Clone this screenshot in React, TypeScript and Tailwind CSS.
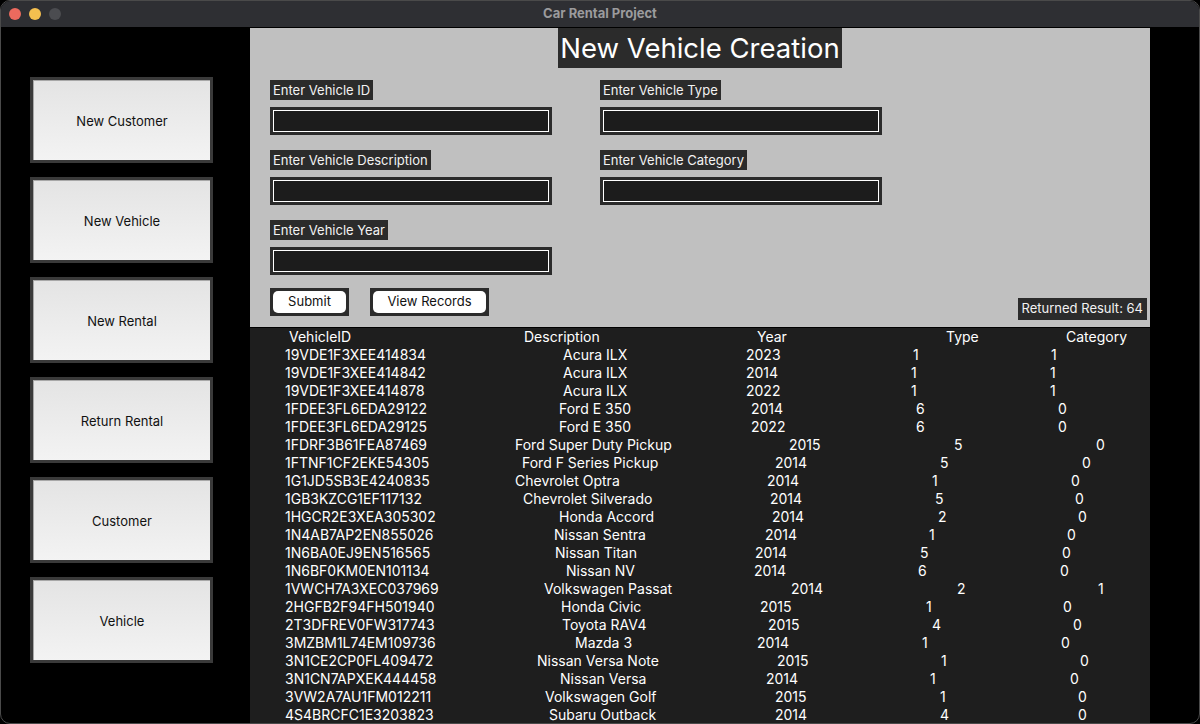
import React from "react";

// [id, description, year, type, category, descX, yearX, typeX, catX]
type Row = [string, string, string, string, string, number, number, number, number];

const rows: Row[] = [
  ["19VDE1F3XEE414834", "Acura ILX", "2023", "1", "1", 563, 746, 913, 1051],
  ["19VDE1F3XEE414842", "Acura ILX", "2014", "1", "1", 563, 746, 911, 1050],
  ["19VDE1F3XEE414878", "Acura ILX", "2022", "1", "1", 563, 746, 911, 1050],
  ["1FDEE3FL6EDA29122", "Ford E 350", "2014", "6", "0", 559, 751, 916, 1058],
  ["1FDEE3FL6EDA29125", "Ford E 350", "2022", "6", "0", 559, 751, 916, 1058],
  ["1FDRF3B61FEA87469", "Ford Super Duty Pickup", "2015", "5", "0", 515, 789, 954, 1096],
  ["1FTNF1CF2EKE54305", "Ford F Series Pickup", "2014", "5", "0", 522, 775, 940, 1082],
  ["1G1JD5SB3E4240835", "Chevrolet Optra", "2014", "1", "0", 515, 767, 932, 1071],
  ["1GB3KZCG1EF117132", "Chevrolet Silverado", "2014", "5", "0", 523, 770, 935, 1075],
  ["1HGCR2E3XEA305302", "Honda Accord", "2014", "2", "0", 559, 772, 938, 1078],
  ["1N4AB7AP2EN855026", "Nissan Sentra", "2014", "1", "0", 554, 765, 929, 1067],
  ["1N6BA0EJ9EN516565", "Nissan Titan", "2014", "5", "0", 555, 755, 920, 1062],
  ["1N6BF0KM0EN101134", "Nissan NV", "2014", "6", "0", 566, 754, 918, 1060],
  ["1VWCH7A3XEC037969", "Volkswagen Passat", "2014", "2", "1", 544, 791, 957, 1098],
  ["2HGFB2F94FH501940", "Honda Civic", "2015", "1", "0", 561, 760, 926, 1063],
  ["2T3DFREV0FW317743", "Toyota RAV4", "2015", "4", "0", 562, 768, 932, 1073],
  ["3MZBM1L74EM109736", "Mazda 3", "2014", "1", "0", 575, 757, 922, 1061],
  ["3N1CE2CP0FL409472", "Nissan Versa Note", "2015", "1", "0", 537, 777, 941, 1080],
  ["3N1CN7APXEK444458", "Nissan Versa", "2014", "1", "0", 560, 766, 930, 1070],
  ["3VW2A7AU1FM012211", "Volkswagen Golf", "2015", "1", "0", 545, 775, 940, 1078],
  ["4S4BRCFC1E3203823", "Subaru Outback", "2014", "4", "0", 549, 775, 940, 1078],
];

const sideButtons = ["New Customer", "New Vehicle", "New Rental", "Return Rental", "Customer", "Vehicle"];

function SideButton({ label }: { label: string }) {
  return (
    <div className="w-[183px] h-[86px] bg-[#3a3a3a] p-[3px]">
      <div className="w-full h-full bg-gradient-to-b from-[#e4e4e4] to-[#f3f3f3] border-t border-l border-[#a8a8a8] flex items-center justify-center pt-[2px] text-[13px] text-[#111]">
        {label}
      </div>
    </div>
  );
}

function Label({ text }: { text: string }) {
  return (
    <div className="self-start h-[20px] bg-[#2b2b2b] px-[3px] flex items-center text-[13px] text-[#f2f2f2] leading-none">
      {text}
    </div>
  );
}

function Input() {
  return (
    <div className="w-[282px] h-[28px] bg-[#2b2b2b] p-[3px] mt-[7px]">
      <div className="w-full h-full bg-[#1c1c1c] border border-white" />
    </div>
  );
}

function Field({ text }: { text: string }) {
  return (
    <div className="flex flex-col">
      <Label text={text} />
      <Input />
    </div>
  );
}

function Btn({ text, w }: { text: string; w: string }) {
  return (
    <div className={`${w} h-[28px] bg-[#2b2b2b] p-[3px]`}>
      <div className="w-full h-full bg-white rounded-[5px] flex items-center justify-center text-[13px] text-[#111]">
        {text}
      </div>
    </div>
  );
}

export default function App() {
  return (
    <div className="w-[1200px] h-[724px] overflow-hidden bg-black" style={{ fontFamily: "Inter, 'Noto Sans', sans-serif" }}>
      <div className="w-full h-full rounded-[10px] overflow-hidden border border-[#4a4a4a] flex flex-col bg-black">
        {/* title bar */}
        <div className="relative h-[27px] bg-[#2e2f33] border-b border-black flex items-center shrink-0">
          <div className="flex gap-[8px] pl-[8px]">
            <div className="w-[12px] h-[12px] rounded-full bg-[#ec6a5e]" />
            <div className="w-[12px] h-[12px] rounded-full bg-[#f4bf4f]" />
            <div className="w-[12px] h-[12px] rounded-full bg-[#4b4c50]" />
          </div>
          <div className="absolute inset-0 flex items-center justify-center text-[13px] font-bold text-[#9b9b9d]">
            Car Rental Project
          </div>
        </div>
        {/* body */}
        <div className="flex flex-1 min-h-0">
          <div className="w-[249px] shrink-0 flex flex-col gap-[14px] pl-[29px] pt-[49px]">
            {sideButtons.map((b) => (
              <SideButton key={b} label={b} />
            ))}
          </div>
          <div className="w-[900px] shrink-0 flex flex-col">
            {/* form */}
            <div className="h-[299px] bg-[#c0c0c0] flex flex-col shrink-0">
              <div className="flex justify-center">
                <div className="h-[40px] bg-[#2b2b2b] px-[2px] flex items-center pt-[2px] text-[27.5px] text-white leading-none">
                  New Vehicle Creation
                </div>
              </div>
              <div className="pl-[20px] pt-[12px] grid grid-cols-[282px_282px] gap-x-[48px] gap-y-[15px]">
                <Field text="Enter Vehicle ID" />
                <Field text="Enter Vehicle Type" />
                <Field text="Enter Vehicle Description" />
                <Field text="Enter Vehicle Category" />
                <Field text="Enter Vehicle Year" />
              </div>
              <div className="flex items-start pl-[20px] pt-[13px] pr-[3px]">
                <Btn text="Submit" w="w-[79px]" />
                <div className="ml-[21px]">
                  <Btn text="View Records" w="w-[119px]" />
                </div>
                <div className="ml-auto mt-[10px] h-[22px] bg-[#2b2b2b] px-[4px] flex items-center text-[13px] text-[#f2f2f2]">
                  Returned Result: 64
                </div>
              </div>
            </div>
            {/* table */}
            <div className="flex-1 bg-[#1e1e1e] border-t border-black text-white text-[14px] leading-[18px]">
              <div className="flex h-[18px] items-center">
                <span className="pl-[39px] w-[274px]">VehicleID</span>
                <span className="w-[233px]">Description</span>
                <span className="w-[189px]">Year</span>
                <span className="w-[120px]">Type</span>
                <span>Category</span>
              </div>
              {rows.map((r) => (
                <div key={r[0]} className="flex h-[18px] items-center whitespace-nowrap pl-[35px]">
                  <span className="shrink-0" style={{ width: r[5] - 285 }}>{r[0]}</span>
                  <span className="shrink-0" style={{ width: r[6] - r[5] }}>{r[1]}</span>
                  <span className="shrink-0" style={{ width: r[7] - r[6] }}>{r[2]}</span>
                  <span className="shrink-0" style={{ width: r[8] - r[7] }}>{r[3]}</span>
                  <span className="shrink-0">{r[4]}</span>
                </div>
              ))}
            </div>
          </div>
          <div className="flex-1" />
        </div>
      </div>
    </div>
  );
}
